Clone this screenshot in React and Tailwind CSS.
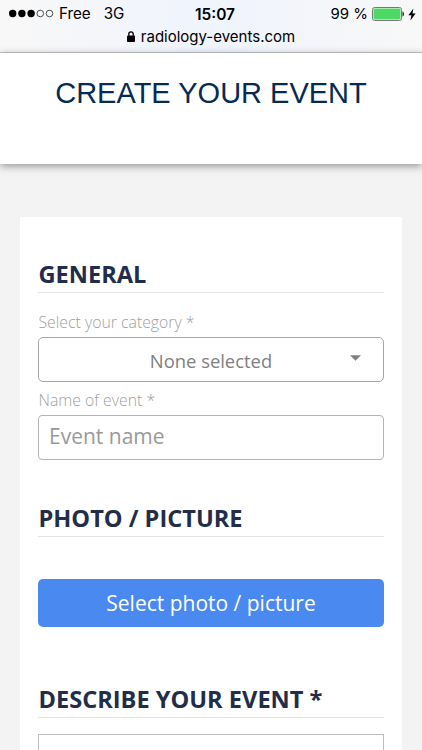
import { useState } from "react";

const SIGNAL_DOTS = [true, true, true, false, false];

const StatusBar = () => (
  <header className="h-[53px] shrink-0 border-b border-[#c8c9cb] bg-linear-to-r from-[#f8f8f8] via-[#f0f4fd] to-[#f8f8f8] font-['Inter',sans-serif] text-black">
    <div className="grid h-[28px] grid-cols-3 items-center pl-[9px] pr-[6px]">
      <div className="flex items-center whitespace-nowrap text-[15.2px]">
        <svg className="h-[9px] w-[45px] shrink-0" viewBox="0 0 45 9">
          {SIGNAL_DOTS.map((filled, index) => (
            <circle
              key={index}
              cx={3.7 + index * 9.2}
              cy="4.5"
              r={filled ? 3.7 : 3.3}
              fill={filled ? "#000" : "none"}
              stroke={filled ? "none" : "#222"}
              strokeWidth="0.8"
            />
          ))}
        </svg>
        <span className="ml-[5px] pt-px">Free</span>
        <span className="ml-[13px] pt-px">3G</span>
      </div>
      <span className="pl-[5px] pt-px text-center text-[15.5px] font-semibold">15:07</span>
      <div className="flex items-center justify-end whitespace-nowrap text-[15px]">
        <span className="pt-px">99 %</span>
        {/* Battery */}
        <svg className="ml-[4px] h-[14px] w-[33px] shrink-0" viewBox="0 0 33 14">
          <rect x="0.5" y="0.5" width="29" height="13" rx="2" fill="#fff" stroke="#777" />
          <rect x="1.5" y="1.5" width="27" height="11" rx="1" fill="#4cd964" />
          <path d="M30.5 4.5c2 .6 2 4.4 0 5z" fill="#222" />
        </svg>
        <svg className="ml-[3px] h-[13px] w-[8px] shrink-0" viewBox="0 0 8 13">
          <path d="M5.4 0.5 0.4 7.2h3L2.4 12.5 7.6 5.5H4.5z" fill="#000" />
        </svg>
      </div>
    </div>
    <div className="flex h-[18px] items-center justify-center text-[15px]">
      <svg className="mr-[6px] mb-[2px] h-[11px] w-[8px]" viewBox="0 0 8 11">
        <path d="M1.8 5V3.1a2.2 2.2 0 0 1 4.4 0V5" fill="none" stroke="#000" strokeWidth="1.3" />
        <rect y="4.6" width="8" height="6.4" rx="0.8" fill="#000" />
      </svg>
      <span>radiology-events.com</span>
    </div>
  </header>
);

const SectionTitle = ({ children }) => (
  <h2 className="h-[39px] border-b border-[#e2e3e6] pl-[0.5px] text-[23.6px] leading-[41px] font-bold text-[#222d4a]">
    {children}
  </h2>
);

const App = () => {
  const [eventName, setEventName] = useState("");

  return (
    <div className="flex h-[750px] flex-col overflow-hidden bg-[#f3f3f3] font-['Open_Sans',sans-serif]">
      <StatusBar />

      <div className="h-[111px] shrink-0 bg-white pt-[20px] text-center shadow-[0_2px_8px_rgba(0,0,0,0.4)]">
        <h1 className="font-['Liberation_Sans',sans-serif] text-[29px] leading-[40px] text-[#062b51]">
          CREATE YOUR EVENT
        </h1>
      </div>

      <main className="mx-[20px] mt-[53px] h-[600px] shrink-0 bg-white px-[18px] pt-[37px]">
        <SectionTitle>GENERAL</SectionTitle>
        <label className="mt-[18px] block h-[26px] pl-[0.5px] text-[15.8px] leading-[22px] font-light text-[#a0a0a0]">
          Select your category *
        </label>
        <button className="flex h-[45px] w-full items-center justify-center rounded-[5px] border border-[#a6a6a6] pt-[2px] text-[18.4px] text-[#808080]">
          <span className="flex-1 pl-[33px] text-center">None selected</span>
          <svg className="mr-[22px] mb-[6px] h-[6px] w-[11px]" viewBox="0 0 11 6">
            <path d="M0 0.3h11L5.5 5.7z" fill="#808080" />
          </svg>
        </button>
        <label className="mt-[7px] block h-[26px] pl-[0.5px] text-[15.8px] leading-[22px] font-light text-[#a0a0a0]">
          Name of event *
        </label>
        <input
          className="block h-[45px] w-full rounded-[4px] border border-[#b4b4b4] px-[10px] pb-[3px] text-[21px] outline-none placeholder:text-[#999]"
          placeholder="Event name"
          value={eventName}
          onChange={(e) => setEventName(e.target.value)}
        />

        {/* Photo */}
        <div className="mt-[38px]">
          <SectionTitle>PHOTO / PICTURE</SectionTitle>
          <button className="mt-[42px] h-[48px] w-full rounded-[5px] bg-[#4a89ef] pt-px text-[21px] text-white">
            Select photo / picture
          </button>
        </div>

        {/* Description */}
        <div className="mt-[52px]">
          <SectionTitle>DESCRIBE YOUR EVENT *</SectionTitle>
          <textarea className="mt-[16px] block h-[120px] w-full resize-none border border-[#bdbdbd] outline-none" />
        </div>
      </main>
    </div>
  );
};

export default App;
